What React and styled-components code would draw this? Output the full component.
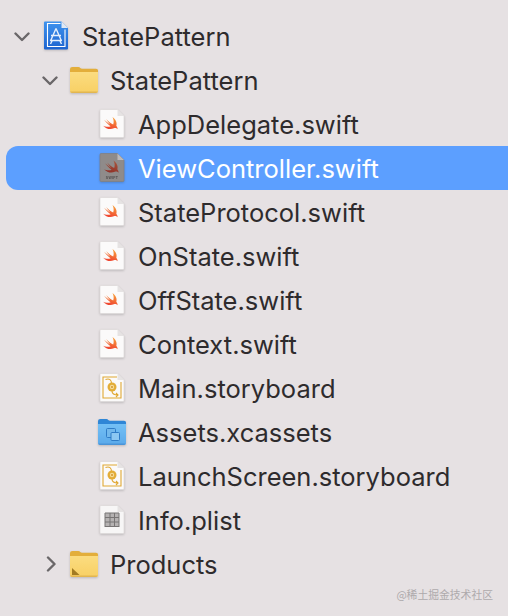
import styled, { createGlobalStyle } from "styled-components";

const GlobalStyle = createGlobalStyle`
	html, body {
		margin: 0;
		padding: 0;
		background: #e6e1e3;
	}
`;

const PAGE = "M2 .5h16.5l6.500 6.500v20.500a1 1 0 0 1-1 1H2a1 1 0 0 1-1-1V1.500a1 1 0 0 1 1-1z";
const FOLD = "M18.500 .5V7H25z";
const BIRD =
	"M13.500 8C16.800 10.300 18.400 13.800 17.300 16.800C18.300 18 18.700 19.300 18.500 20.300C17.600 18.900 16.100 18.600 14.800 19.200C11.500 20.900 7 20 3.800 16.400C6.400 18 9.600 18.300 11.600 17.200C9 15.300 6.500 12.900 5 10.800C7 12.600 9.400 14.400 11.200 15.400C9.600 13.700 8.200 11.800 7.200 10C9.400 12.300 11.700 14.200 14.200 15.600C15 13.200 14.800 10.600 13.500 8z";

const SwiftIcon = ({ selected }) => {
	const id = selected ? "birdDim" : "bird";
	return (
		<svg width="26" height="30" viewBox="0 0 26 30">
			<defs>
				<linearGradient id={id} x1="0.7" y1="0" x2="0.3" y2="1">
					<stop offset="0" stopColor={selected ? "#a8563c" : "#f9a53e"} />
					<stop offset="1" stopColor={selected ? "#8f2e26" : "#ee3b2e"} />
				</linearGradient>
			</defs>
			<path d={PAGE} fill={selected ? "#8f8b8a" : "#fbfafa"} stroke={selected ? "#847f7e" : "#dcd8d9"} strokeWidth="0.7" />
			<path d={FOLD} fill={selected ? "#bdb9b9" : "#e6e3e3"} />
			<path d={BIRD} transform={selected ? "translate(1 -0.500)" : "translate(0 0)"} fill={`url(#${id})`} />
			{selected && (
				<TinyLabel x="13" y="26" textAnchor="middle">
					SWIFT
				</TinyLabel>
			)}
		</svg>
	);
};

const StoryboardIcon = () => (
	<svg width="26" height="30" viewBox="0 0 26 30">
		<path d={PAGE} fill="#fbfafa" stroke="#dcd8d9" strokeWidth="0.7" />
		<path d={FOLD} fill="#e6e3e3" />
		<path d="M18 4H4v21h18V9" fill="none" stroke="#e0a833" strokeWidth="1.100" />
		<path d="M6.500 6.500c4-1.500 6 .5 6 4M13 18c0 3 2 4 6 4m-2-2 2 2-2 2" fill="none" stroke="#e0a833" strokeWidth="1.100" />
		<circle cx="13" cy="14" r="4.500" fill="#e3ad38" />
		<circle cx="13" cy="14" r="2.200" fill="#f6dc9a" />
		<circle cx="13" cy="14" r="1" fill="#d2962a" />
	</svg>
);

const PlistIcon = () => (
	<svg width="26" height="30" viewBox="0 0 26 30">
		<path d={PAGE} fill="#f7f6f6" stroke="#dcd8d9" strokeWidth="0.7" />
		<path d={FOLD} fill="#e6e3e3" />
		<rect x="6" y="8" width="14" height="14" rx="1" fill="#b5b2b2" />
		<path d="M6 8h14M6 12.500h14M6 17h14M6 21.500h14M6 8v14M11 8v14M15.500 8v14M20 8v14" fill="none" stroke="#777474" strokeWidth="1" />
	</svg>
);

const ProjectIcon = () => (
	<svg width="26" height="30" viewBox="0 0 26 30">
		<defs>
			<linearGradient id="proj" x1="0" y1="0" x2="0" y2="1">
				<stop offset="0" stopColor="#3f93ee" />
				<stop offset="1" stopColor="#1c63cf" />
			</linearGradient>
		</defs>
		<path d={PAGE} fill="url(#proj)" />
		<path d={FOLD} fill="#dfe8f4" />
		<path d="M17.500 2.500H4.500V25.500H22V8.500" fill="none" stroke="#fff" strokeWidth="1.100" />
		<path d="M13 7.500l5.500 12.500M13 7.500L7.500 20M8 14.500h10M7 19.500h12M9 20l-1.500 3M17 20l1.500 3" fill="none" stroke="#e6f0fc" strokeWidth="1.400" />
	</svg>
);

const FolderIcon = ({ blue, alias }) => {
	const id = blue ? "folderBlue" : "folderYellow";
	return (
		<svg width="30" height="28" viewBox="0 0 30 28">
			<defs>
				<linearGradient id={id} x1="0" y1="0" x2="0" y2="1">
					<stop offset="0" stopColor={blue ? "#74c0f5" : "#fbdc80"} />
					<stop offset="1" stopColor={blue ? "#5aa9ea" : "#f8d064"} />
				</linearGradient>
			</defs>
			<path d="M1 6V3.500A2.500 2.500 0 0 1 3.500 1h6c1.500 0 2 1.800 3.500 1.800h14A2 2 0 0 1 29 5v3H1z" fill={blue ? "#2f86d6" : "#e3ae3b"} />
			<path d="M1 6h28v19a2 2 0 0 1-2 2H3a2 2 0 0 1-2-2z" fill={`url(#${id})`} />
			<path d="M1.200 25.500a2 2 0 0 0 1.800 1.500h24a2 2 0 0 0 1.800-1.500z" fill={blue ? "#4a94d8" : "#e2b650"} />
			{blue && (
				<>
					<rect x="9.500" y="10.500" width="9" height="9" rx="1" fill="#72b8ec" stroke="#2f7cc6" strokeWidth="1" />
					<rect x="14" y="14.500" width="8.500" height="8" rx="1" fill="#8cc8f2" stroke="#2f7cc6" strokeWidth="1" />
				</>
			)}
			{alias && <path d="M3 18l7.500 7H3z" fill="#a27b22" />}
		</svg>
	);
};

const Chevron = ({ open }) => (
	<svg width="16" height="16" viewBox="0 0 16 16">
		<path
			d={open ? "M1.500 5.500l6.500 6.500 6.500-6.500" : "M6 1.500l6.500 6.500-6.500 6.500"}
			fill="none"
			stroke="#6a6769"
			strokeWidth="2.400"
			strokeLinecap="round"
			strokeLinejoin="round"
		/>
	</svg>
);

const items = [
	{ name: "StatePattern", level: 0, open: true, icon: <ProjectIcon /> },
	{ name: "StatePattern", level: 1, open: true, icon: <FolderIcon /> },
	{ name: "AppDelegate.swift", level: 2, icon: <SwiftIcon /> },
	{ name: "ViewController.swift", level: 2, selected: true, icon: <SwiftIcon selected /> },
	{ name: "StateProtocol.swift", level: 2, icon: <SwiftIcon /> },
	{ name: "OnState.swift", level: 2, icon: <SwiftIcon /> },
	{ name: "OffState.swift", level: 2, icon: <SwiftIcon /> },
	{ name: "Context.swift", level: 2, icon: <SwiftIcon /> },
	{ name: "Main.storyboard", level: 2, icon: <StoryboardIcon /> },
	{ name: "Assets.xcassets", level: 2, icon: <FolderIcon blue /> },
	{ name: "LaunchScreen.storyboard", level: 2, icon: <StoryboardIcon /> },
	{ name: "Info.plist", level: 2, icon: <PlistIcon /> },
	{ name: "Products", level: 1, open: false, icon: <FolderIcon alias /> },
];

export default function App() {
	return (
		<>
			<GlobalStyle />
			<Navigator>
				<Tree>
					{items.map((item, index) => (
						<Row key={index} $level={item.level} $selected={item.selected}>
							<Toggle>{item.open !== undefined && <Chevron open={item.open} />}</Toggle>
							<IconBox>{item.icon}</IconBox>
							<Name $selected={item.selected}>{item.name}</Name>
						</Row>
					))}
				</Tree>
				<Watermark>@稀土掘金技术社区</Watermark>
			</Navigator>
		</>
	);
}

const Navigator = styled.div`
	position: relative;
	width: 508px;
	height: 616px;
	overflow: hidden;
	background: #e6e1e3;
`;

const Tree = styled.div`
	display: flex;
	flex-direction: column;
	padding: 14px 0 0 6px;
`;

const Row = styled.div`
	display: flex;
	align-items: center;
	height: 44px;
	padding-left: ${p => p.$level * 28 + 8}px;
	border-radius: 12px 0 0 12px;
	background: ${p => (p.$selected ? "#5c9fff" : "transparent")};
`;

const Toggle = styled.div`
	display: flex;
	align-items: center;
	justify-content: center;
	width: 16px;
	height: 16px;
	flex-shrink: 0;
`;

const IconBox = styled.div`
	display: flex;
	align-items: center;
	justify-content: center;
	width: 30px;
	height: 34px;
	margin-left: 11px;
	flex-shrink: 0;
	filter: drop-shadow(0 1px 1px rgba(0, 0, 0, 0.18));
`;

const TinyLabel = styled.text`
	font-family: "Liberation Sans", sans-serif;
	font-size: 3.5px;
	font-weight: bold;
	letter-spacing: 0.3px;
	fill: #4f4b4a;
`;

const Name = styled.span`
	margin-left: 11px;
	font-family: Inter, "Liberation Sans", sans-serif;
	font-size: 25.5px;
	color: ${p => (p.$selected ? "#ffffff" : "#2e2b2d")};
	white-space: nowrap;
`;

const Watermark = styled.div`
	position: absolute;
	right: 15px;
	bottom: 14px;
	font-family: "Noto Sans CJK SC", sans-serif;
	font-size: 10.8px;
	color: #aeaaac;
`;
